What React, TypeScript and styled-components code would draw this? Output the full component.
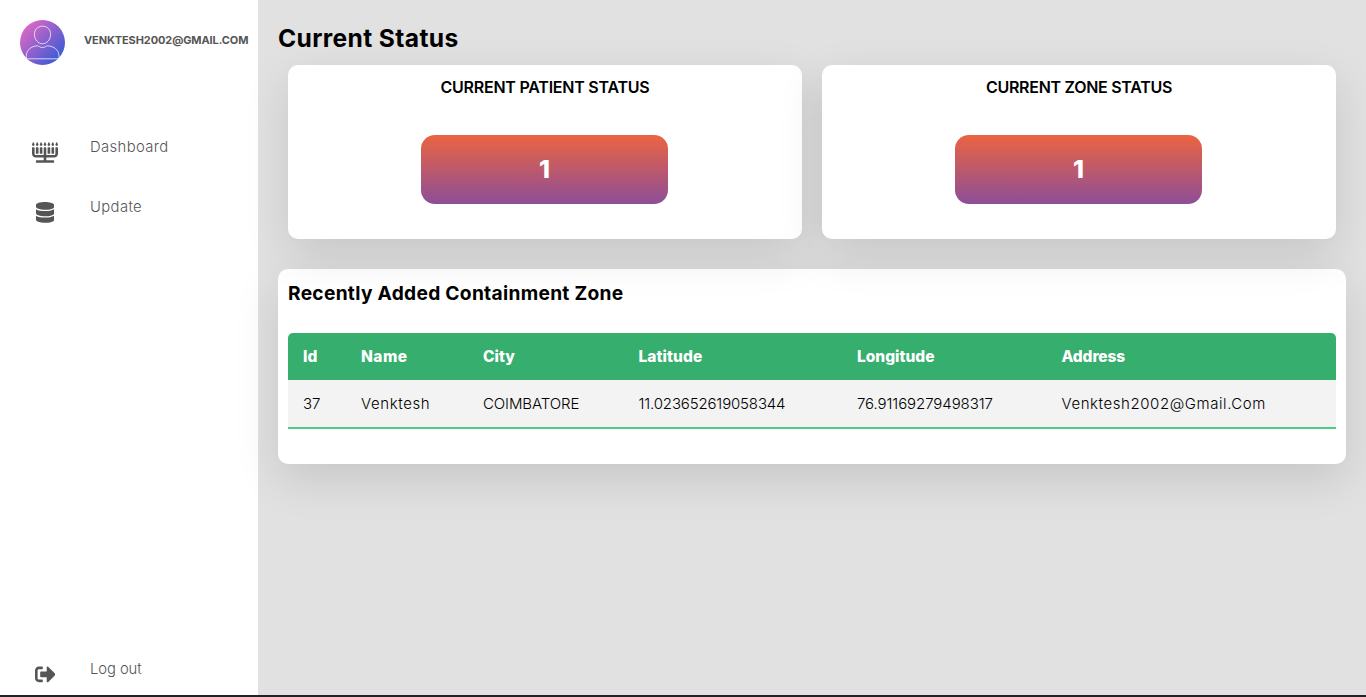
import React from "react";
import styled, { createGlobalStyle } from "styled-components";
import { FaDatabase, FaMenorah, FaSignOutAlt } from "react-icons/fa";

const GlobalStyle = createGlobalStyle`
  * { box-sizing: border-box; margin: 0; padding: 0; }
  body { font-family: Inter, "Open Sans", sans-serif; overflow: hidden; }
`;

const Page = styled.div`
  display: flex;
  height: 697px;
  border-bottom: 2px solid #232123;
  background: #e1e1e1;
  overflow: hidden;
`;

const Sidebar = styled.aside`
  flex: 0 0 258px;
  display: flex;
  flex-direction: column;
  background: #fff;
  color: #555;
`;

const Profile = styled.div`
  display: flex;
  gap: 19px;
  height: 117px;
  padding: 20px 0 0 20px;
`;

const Avatar = styled.svg`
  width: 45px;
  height: 45px;
  flex: none;
`;

const Label = styled.span<{ $track?: number }>`
  letter-spacing: ${(p) => p.$track ?? 0}px;
  white-space: nowrap;
`;

const Email = styled(Label)`
  font-size: 11px;
  font-weight: 700;
  line-height: 16px;
  margin-top: 12px;
  text-transform: uppercase;
`;

const NavItem = styled.a<{ $last?: boolean }>`
  display: flex;
  height: 60px;
  line-height: 60px;
  font-size: 14.8px;
  font-weight: 300;
  margin-top: ${(p) => (p.$last ? "auto" : "0")};
  margin-bottom: ${(p) => (p.$last ? "-4px" : "0")};
`;

const NavIcon = styled.span<{ $width: number }>`
  display: flex;
  flex: 0 0 90px;
  justify-content: center;
  padding-top: 25px;
  font-size: 20.8px;

  svg {
    width: ${(p) => p.$width}px;
  }
`;

const Main = styled.main`
  flex: 1;
  padding: 20px;
  position: relative;
`;

const Title = styled.h1`
  height: 45px;
  font-size: 24.6px;
  font-weight: 700;
  line-height: 36px;
  color: #000;
`;

const Cards = styled.section`
  display: grid;
  grid-template-columns: 1fr 1fr;
  gap: 20px;
  padding: 0 10px;
  margin-bottom: 30px;
`;

const Panel = styled.div`
  border-radius: 10px;
  background: #fff;
  box-shadow: 0 15px 45px rgba(0, 0, 0, 0.12);
`;

const Card = styled(Panel)`
  display: flex;
  flex-direction: column;
  align-items: center;
  height: 174px;
  padding-top: 10px;
`;

const CardTitle = styled.h2`
  height: 60px;
  font-size: 16px;
  font-weight: 600;
  line-height: 25px;
`;

const Count = styled.div`
  width: 247px;
  height: 69px;
  margin-right: 1px;
  border-radius: 14px;
  background: linear-gradient(#eb6440, #8d4e98);
  color: #fff;
  font-size: 25px;
  font-weight: 800;
  line-height: 69px;
  text-align: center;
`;

const Zones = styled(Panel)`
  height: 195px;
  padding: 10px;
`;

const ZonesTitle = styled.h2`
  height: 54px;
  font-size: 19.2px;
  font-weight: 700;
  line-height: 29px;
`;

const Table = styled.div`
  border-radius: 5px 5px 0 0;
  overflow: hidden;
  border-bottom: 2px solid #4bcb85;
`;

const Row = styled.div<{ $head?: boolean }>`
  display: grid;
  grid-template-columns: 58px 122px 155.5px 218.5px 204.5px 1fr;
  height: 47px;
  line-height: 47px;
  padding-left: 15px;
  font-size: ${(p) => (p.$head ? 15.5 : 15)}px;
  font-weight: ${(p) => (p.$head ? 800 : 300)};
  background: ${(p) => (p.$head ? "#36ae6e" : "#f3f3f3")};
  color: ${(p) => (p.$head ? "#fff" : "#000")};
`;

const nav = [
  { text: "Dashboard", icon: <FaMenorah />, width: 26, track: 0.38 },
  { text: "Update", icon: <FaDatabase />, width: 18.2, track: 0.4 },
  { text: "Log out", icon: <FaSignOutAlt />, width: 20.8, track: -0.08, last: true },
];

const statuses = [
  { title: "CURRENT PATIENT STATUS", count: 1, track: -0.23 },
  { title: "CURRENT ZONE STATUS", count: 1, track: -0.28 },
];

const columns = [
  { head: "Id", value: "37", headTrack: 0, track: 0 },
  { head: "Name", value: "Venktesh", headTrack: 0.5, track: 0.6 },
  { head: "City", value: "COIMBATORE", headTrack: 0, track: -0.1 },
  { head: "Latitude", value: "11.023652619058344", headTrack: 0.08, track: -0.15 },
  { head: "Longitude", value: "76.91169279498317", headTrack: 0, track: -0.08 },
  { head: "Address", value: "Venktesh2002@Gmail.Com", headTrack: -0.1, track: 0.57 },
];

export default function App() {
  return (
    <>
      <GlobalStyle />
      <Page>
        <Sidebar>
          <Profile>
            <Avatar viewBox="0 0 45 45">
              <defs>
                <linearGradient id="avatar" x1="0.1" y1="0.15" x2="0.85" y2="0.85">
                  <stop offset="0" stopColor="#dc67c4" />
                  <stop offset="1" stopColor="#3f5bd6" />
                </linearGradient>
              </defs>
              <circle cx="22.5" cy="22.5" r="22.5" fill="url(#avatar)" />
              <g fill="none" stroke="#fff" strokeOpacity="0.8" strokeWidth="0.9">
                <path d="M22.5 6.2C27.4 6.2 30.6 9.6 30.6 14.2C30.6 19.4 27 23.8 22.5 23.8C18 23.8 14.4 19.4 14.4 14.2C14.4 9.6 17.6 6.2 22.5 6.2Z" />
                <path d="M6.3 38.8V36C6.3 30 11 26.3 17.3 25.8C19 25.8 20 27.6 22.5 27.6C25 27.6 26 25.8 27.7 25.8C34 26.3 39 30 39 36V38.8Z" />
              </g>
            </Avatar>
            <Email $track={-0.1}>venktesh2002@gmail.com</Email>
          </Profile>
          {nav.map((n) => (
            <NavItem key={n.text} $last={n.last}>
              <NavIcon $width={n.width}>{n.icon}</NavIcon>
              <Label $track={n.track}>{n.text}</Label>
            </NavItem>
          ))}
        </Sidebar>
        <Main>
          <Title>
            <Label $track={0.37}>Current Status</Label>
          </Title>
          <Cards>
            {statuses.map((s) => (
              <Card key={s.title}>
                <CardTitle>
                  <Label $track={s.track}>{s.title}</Label>
                </CardTitle>
                <Count>{s.count}</Count>
              </Card>
            ))}
          </Cards>
          <Zones>
            <ZonesTitle>
              <Label $track={0.28}>Recently Added Containment Zone</Label>
            </ZonesTitle>
            <Table>
              <Row $head>
                {columns.map((c) => (
                  <Label key={c.head} $track={c.headTrack}>{c.head}</Label>
                ))}
              </Row>
              <Row>
                {columns.map((c) => (
                  <Label key={c.head} $track={c.track}>{c.value}</Label>
                ))}
              </Row>
            </Table>
          </Zones>
        </Main>
      </Page>
    </>
  );
}
